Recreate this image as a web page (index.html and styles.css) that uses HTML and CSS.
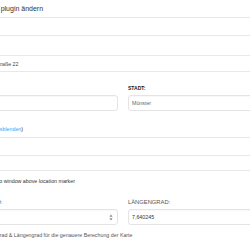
FILE: index.html
```html
<!DOCTYPE html>
<html lang="de">
<head>
    <meta charset="UTF-8">
    <meta name="viewport" content="width=device-width, initial-scale=1.0">
    <title>Ort plugin ändern</title>
    <link rel="stylesheet" href="styles.css">
</head>
<body>
    <div id="page">
        <div class="head"><span class="title">Ort plugin ändern</span></div>
        <div class="row"></div>
        <div class="row tall"></div>
        <div class="row addr">Hauptstraße 22</div>

        <div class="cols top-cols">
            <div class="field">
                <div class="label">PLZ:</div>
                <div class="input"></div>
            </div>
            <div class="field">
                <div class="label">STADT:</div>
                <div class="input muted">Münster</div>
            </div>
        </div>

        <div class="toggle">(Karte <a href="#">ausblenden</a>)</div>

        <div class="band"></div>
        <div class="band short"></div>

        <div class="check"><span class="box"></span>Show info window above location marker</div>

        <div class="cols">
            <div class="field">
                <div class="label light">BREITENGRAD:</div>
                <div class="input">
                    <span></span>
                    <svg class="spin" width="4" height="7" viewBox="0 0 4 7"><path d="M2 0.5 L3.6 2.8 L0.4 2.8 Z M2 6.5 L3.6 4.2 L0.4 4.2 Z" fill="#8a8a8a"/></svg>
                </div>
            </div>
            <div class="field">
                <div class="label light">LÄNGENGRAD:</div>
                <div class="input">7,640245</div>
            </div>
        </div>

        <div class="help">Breitengrad &amp; Längengrad für die genauere Berechung der Karte</div>
    </div>
</body>
</html>
```

FILE: styles.css
```css
body {
    margin: 0;
    background-color: #ffffff;
    overflow: hidden;
    font-family: "Liberation Sans", Arial, sans-serif;
    color: #333333;
}
#page {
    margin-left: -41px; /* form starts left of the visible area */
    width: 340px;
}
.head {
    height: 17px;
    border-bottom: 1px solid #e8e8e8;
    padding-left: 30px;
    display: flex;
    align-items: center;
}
.title {
    font-size: 7px;
    color: #333333;
}
.row {
    height: 17px;
    border-bottom: 1px solid #e8e8e8;
}
.row.tall {
    height: 19px;
}
.row.addr {
    height: 15px;
    padding-left: 23px;
    font-size: 5.3px;
    line-height: 17px;
    color: #444444;
}
.cols {
    display: grid;
    grid-template-columns: 159px 159px;
    gap: 10px;
    margin-top: 12px;
}
.top-cols {
    margin-top: 12px;
}
.label {
    font-size: 5px;
    font-weight: bold;
    line-height: 8px;
    color: #222222;
    margin-bottom: 3px;
}
.label.light {
    font-size: 5.8px;
    font-weight: normal;
    color: #555555;
}
.input {
    box-sizing: border-box;
    height: 16px;
    border: 1px solid #e4e4e4;
    border-radius: 3px;
    padding: 0 6px 0 3px;
    font-size: 5.3px;
    color: #333333;
    display: flex;
    align-items: center;
    justify-content: space-between;
    box-shadow: inset 0 1px 1px rgba(0, 0, 0, 0.03);
}
.input.muted {
    color: #666666;
}
.spin {
    display: block;
    margin-right: -2px;
}
.toggle {
    margin-top: 14px;
    padding-left: 19px;
    font-size: 5.3px;
    line-height: 8px;
    color: #333333;
}
.toggle a {
    color: #2ea3f2;
    text-decoration: none;
}
.band {
    margin-top: 4px;
    height: 17px;
    border-top: 1px solid #e8e8e8;
    border-bottom: 1px solid #e8e8e8;
}
.band.short {
    margin-top: 0;
    height: 14px;
    border-top: none;
}
.check {
    margin-top: 5px;
    font-size: 5.3px;
    line-height: 8px;
    color: #333333;
    display: flex;
    align-items: center;
}
.check .box {
    width: 8px;
    height: 8px;
    border: 1px solid #cccccc;
    border-radius: 2px;
    margin-right: 10px;
}
.cols + .help {
    margin-top: 6px;
}
.help {
    padding-left: 21px;
    font-size: 5.3px;
    line-height: 8px;
    color: #555555;
}
```
